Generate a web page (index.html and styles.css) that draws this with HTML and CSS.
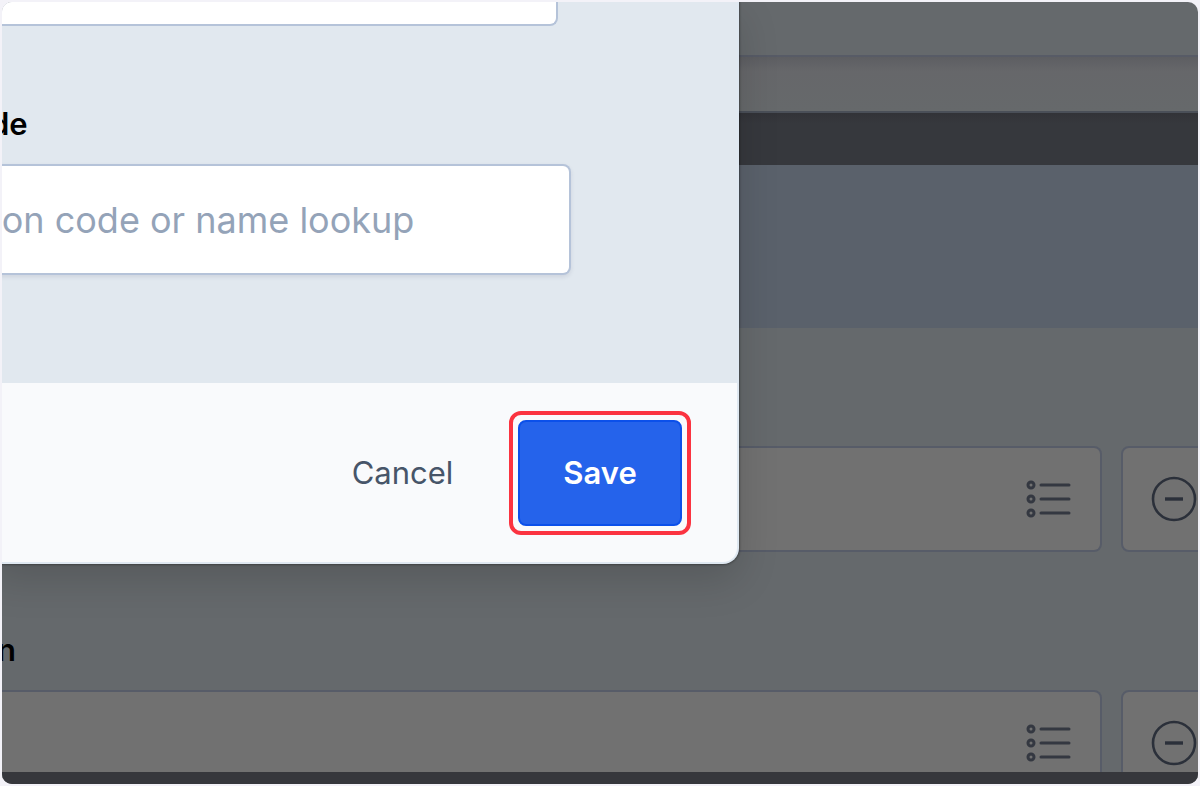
FILE: index.html
```html
<!DOCTYPE html>
<html lang="en">
<head>
<meta charset="utf-8">
<title>Code lookup</title>
<link rel="stylesheet" href="styles.css">
</head>
<body>
<svg class="sprite" aria-hidden="true">
    <defs>
    <symbol id="icon-list" viewBox="0 0 46 38">
        <g fill="none" stroke="currentColor" stroke-width="3">
            <circle cx="5" cy="5" r="3"/>
            <circle cx="5" cy="19" r="3"/>
            <circle cx="5" cy="33" r="3"/>
            <path d="M15 5h28M15 19h28M15 33h28" stroke-linecap="round"/>
        </g>
    </symbol>
    <symbol id="icon-minus" viewBox="0 0 46 46">
        <g fill="none" stroke="currentColor" stroke-width="2.6">
            <circle cx="23" cy="23" r="21"/>
            <path d="M14 23h18" stroke-width="3.4"/>
        </g>
    </symbol>
    </defs>
</svg>
<div class="frame">
    <main class="page">
        <div class="topbar"></div>
        <div class="subbar"></div>
        <div class="darkbar"></div>
        <div class="banner"></div>
        <div class="content">
            <div class="row">
                <div class="lookup">
                    <input type="text" aria-label="Lookup">
                    <button type="button" class="icon-btn" aria-label="Show list"><svg class="icon-list"><use href="#icon-list"/></svg></button>
                </div>
                <button type="button" class="remove" aria-label="Remove"><svg class="icon-minus"><use href="#icon-minus"/></svg></button>
            </div>
            <label class="label" for="second">n</label>
            <div class="row">
                <div class="lookup">
                    <input type="text" id="second">
                    <button type="button" class="icon-btn" aria-label="Show list"><svg class="icon-list"><use href="#icon-list"/></svg></button>
                </div>
                <button type="button" class="remove" aria-label="Remove"><svg class="icon-minus"><use href="#icon-minus"/></svg></button>
            </div>
        </div>
    </main>
    <div class="bottombar"></div>

    <div class="modal" role="dialog">
        <div class="modal-body">
            <input type="text" class="field field-cut" aria-label="Value">
            <label class="label" for="code">de</label>
            <input type="text" class="field" id="code" placeholder="ion code or name lookup">
        </div>
        <div class="modal-footer">
            <button type="button" class="btn">Cancel</button>
            <div class="highlight"><button type="button" class="btn btn-primary">Save</button></div>
        </div>
    </div>
</div>
</body>
</html>
```
FILE: styles.css
```css
* { box-sizing: border-box; }

body {
    margin: 0;
    padding: 2px;
    background: #f3f2f8;
    font-family: Inter, "Liberation Sans", sans-serif;
    font-size: 31px;
    line-height: 40px;
}

input, button {
    font: inherit;
    margin: 0;
}

.sprite {
    position: absolute;
    width: 0;
    height: 0;
}

.frame {
    position: relative;
    height: calc(100vh - 4px);
    overflow: hidden;
    border-radius: 10px;
    background: #65696c;
}

/* dimmed page behind the dialog */
.topbar {
    height: 55px;
    border-bottom: 2px solid #575b66;
}

.subbar {
    height: 56px;
    border-bottom: 2px solid #4a4f58;
    background: linear-gradient(#5d5e62, #66676a 14px, #66696b);
}

.darkbar {
    height: 52px;
    background: linear-gradient(#323338, #36383d 10px);
}

.banner {
    height: 163px;
    background: #5a616b;
}

.content { padding-top: 118px; }

.row {
    display: flex;
    gap: 19px;
    margin-right: -29px;
}

.lookup {
    flex: 1;
    display: flex;
    align-items: center;
    height: 106px;
    padding-right: 28px;
    border: 2px solid #575c68;
    border-left: 0;
    border-radius: 0 8px 8px 0;
    background: #717171;
}

.lookup input {
    flex: 1;
    min-width: 0;
    height: 100%;
    border: 0;
    background: none;
}

.icon-btn {
    display: flex;
    padding: 0;
    border: 0;
    background: none;
    color: #343841;
}

.icon-list {
    width: 46px;
    height: 38px;
}

.icon-minus {
    width: 46px;
    height: 46px;
    flex: none;
}

.remove {
    display: flex;
    align-items: center;
    justify-content: center;
    width: 106px;
    height: 106px;
    padding: 0;
    border: 2px solid #575c68;
    border-radius: 8px;
    background: #717171;
    color: #2b303a;
}

.label {
    display: block;
    margin: 78px 0 20px;
    font-weight: 600;
    color: #000;
}

.content .label { margin-left: -5px; }

.bottombar {
    position: absolute;
    left: 0;
    right: 0;
    bottom: 0;
    height: 12px;
    background: #36373c;
}

/* dialog, runs off the top left */
.modal {
    position: absolute;
    top: 0;
    left: -12px;
    right: 38.4%;
    overflow: hidden;
    border: solid #dfe8f1;
    border-width: 0 2px 2px 0;
    border-radius: 0 0 16px 0;
    background: #f9fafc;
    box-shadow: 0 0 2px 1px rgba(0, 0, 0, .3), 0 16px 40px rgba(0, 0, 0, .15);
}

.modal-body {
    padding: 0 166px 108px 0;
    background: #e1e8ef;
}

.field {
    display: block;
    width: 100%;
    height: 111px;
    padding: 0 3px;
    border: 2px solid #b5c3d9;
    border-left: 0;
    border-radius: 0 8px 8px 0;
    background: #fff;
    font-size: 36px;
    box-shadow: 0 2px 4px rgba(40, 40, 80, .1);
}

.field::placeholder {
    color: #94a3b8;
    opacity: 1;
}

.field-cut {
    width: calc(100% - 13px);
    height: 24px;
    border-top: 0;
    border-radius: 0 0 8px 0;
    box-shadow: none;
}

.modal-footer {
    display: flex;
    justify-content: flex-end;
    gap: 20px;
    padding: 37px 55px 36px;
}

.btn {
    height: 106px;
    padding: 0 45px;
    border: 0;
    border-radius: 8px;
    background: none;
    color: #475569;
}

.btn-primary {
    border: 2px solid #0b50ea;
    padding: 0 43px;
    background: #2563eb;
    color: #fff;
    font-weight: 600;
}

.highlight { position: relative; }

.highlight::after {
    content: "";
    position: absolute;
    inset: -9px;
    border: 4px solid #fb3340;
    border-radius: 12px;
    pointer-events: none;
}
```
